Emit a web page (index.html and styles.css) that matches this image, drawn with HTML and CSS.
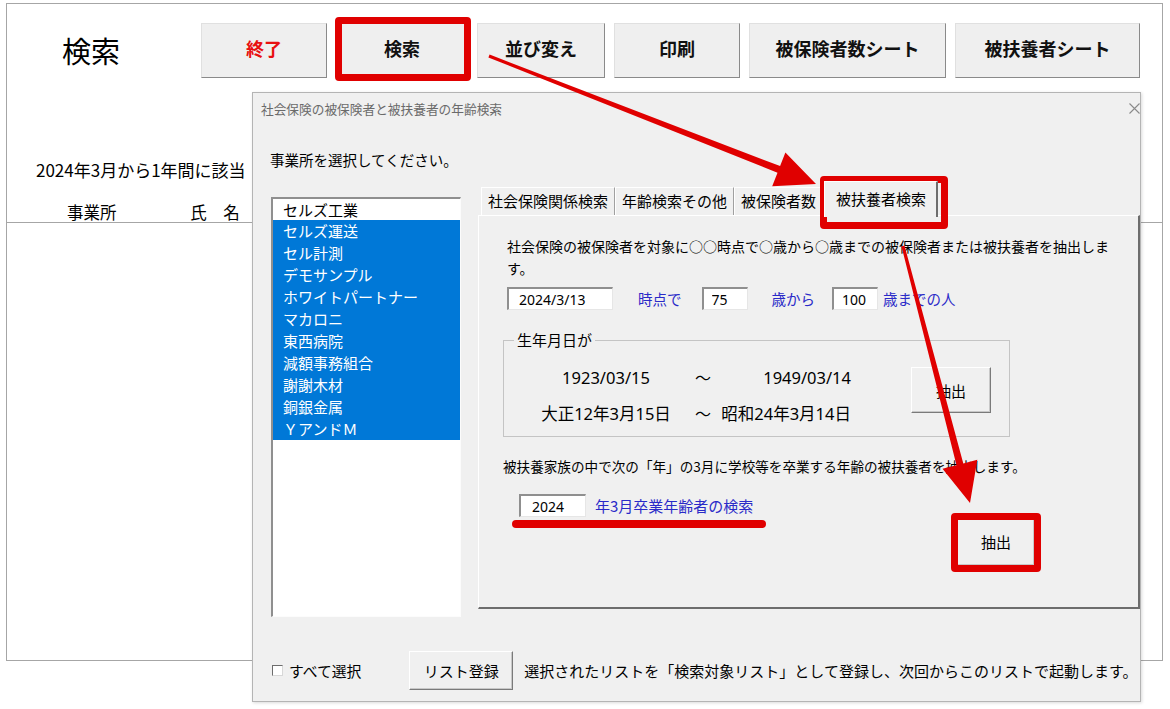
FILE: index.html
```html
<!DOCTYPE html>
<html lang="ja">
<head>
    <meta charset="UTF-8">
    <meta name="viewport" content="width=device-width, initial-scale=1.0">
    <title>検索</title>
    <link rel="stylesheet" href="styles.css">
</head>
<body>
    <!-- シート本体 -->
    <div class="sheet">
        <div class="sheet-head">
            <div class="sheet-title">検索</div>
            <button class="sheet-btn btn-exit">終了</button>
            <button class="sheet-btn">検索</button>
            <button class="sheet-btn">並び変え</button>
            <button class="sheet-btn">印刷</button>
            <button class="sheet-btn">被保険者数シート</button>
            <button class="sheet-btn">被扶養者シート</button>
        </div>
        <div class="sheet-note">2024年3月から1年間に該当</div>
        <div class="sheet-cols">
            <span class="col-office">事業所</span>
            <span class="col-name">氏　名</span>
        </div>
    </div>

    <!-- ダイアログ -->
    <div class="dialog">
        <div class="dlg-title">
            <span>社会保険の被保険者と被扶養者の年齢検索</span>
            <svg class="dlg-close" width="11" height="11" viewBox="0 0 11 11">
                <path d="M0.5 0.5 L10.5 10.5 M10.5 0.5 L0.5 10.5" stroke="#8a8a8a" stroke-width="1.1" fill="none"/>
            </svg>
        </div>
        <div class="dlg-prompt">事業所を選択してください。</div>

        <div class="dlg-main">
            <ul class="office-list">
                <li>セルズ工業</li>
                <li class="selected">セルズ運送</li>
                <li class="selected">セル計測</li>
                <li class="selected">デモサンプル</li>
                <li class="selected">ホワイトパートナー</li>
                <li class="selected">マカロニ</li>
                <li class="selected">東西病院</li>
                <li class="selected">減額事務組合</li>
                <li class="selected">謝謝木材</li>
                <li class="selected">銅銀金属</li>
                <li class="selected">ＹアンドＭ</li>
            </ul>

            <div class="tabs">
                <div class="tab-strip">
                    <div class="tab">社会保険関係検索</div>
                    <div class="tab">年齢検索その他</div>
                    <div class="tab">被保険者数</div>
                    <div class="tab tab-active">被扶養者検索</div>
                </div>
                <div class="tab-panel">
                    <p class="desc">社会保険の被保険者を対象に○○時点で○歳から○歳までの被保険者または被扶養者を抽出しま<br>す。</p>
                    <div class="age-row">
                        <input class="field field-date" type="text" value="2024/3/13">
                        <span class="lbl lbl-at">時点で</span>
                        <input class="field field-num" type="text" value="75">
                        <span class="lbl lbl-from">歳から</span>
                        <input class="field field-num" type="text" value="100">
                        <span class="lbl lbl-to">歳までの人</span>
                    </div>

                    <fieldset class="birth">
                        <legend>生年月日が</legend>
                        <div class="birth-grid">
                            <span class="b-col1">1923/03/15</span>
                            <span class="b-tilde">～</span>
                            <span class="b-col2">1949/03/14</span>
                            <button class="win-btn birth-btn">抽出</button>
                            <span class="b-col1">大正12年3月15日</span>
                            <span class="b-tilde">～</span>
                            <span class="b-col2">昭和24年3月14日</span>
                        </div>
                    </fieldset>

                    <p class="desc2">被扶養家族の中で次の「年」の3月に学校等を卒業する年齢の被扶養者を抽出します。</p>
                    <div class="grad-row">
                        <input class="field field-year" type="text" value="2024">
                        <span class="lbl lbl-grad">年3月卒業年齢者の検索</span>
                    </div>
                    <button class="win-btn grad-btn">抽出</button>
                </div>
            </div>
        </div>

        <div class="dlg-bottom">
            <span class="check"></span>
            <span class="check-label">すべて選択</span>
            <button class="win-btn list-btn">リスト登録</button>
            <span class="bottom-note">選択されたリストを「検索対象リスト」として登録し、次回からこのリストで起動します。</span>
        </div>
    </div>

    <!-- 注釈（赤枠・矢印） -->
    <div class="mark mark-search"></div>
    <div class="mark mark-tab"></div>
    <div class="mark mark-extract"></div>
    <div class="underline"></div>
    <svg class="arrows" width="1170" height="709" viewBox="0 0 1170 709">
        <polygon fill="#e00000" points="489.6,54.6 780.1,166.1 785.4,152.6 816,184 772.2,186.2 777.5,172.7 488.4,57.4"/>
        <polygon fill="#e00000" points="904.5,245.6 963.3,463.4 977.3,459.8 970,503 942.5,468.8 956.5,465.2 901.5,246.4"/>
    </svg>
</body>
</html>
```

FILE: styles.css
```css
body {
    margin: 0;
    background-color: #ffffff;
    font-family: "Noto Sans CJK JP", sans-serif;
    color: #000;
}

/* シート */
.sheet {
    margin: 3px 0 0 6px;
    width: 1157px;
    height: 658px;
    border: 1px solid #a6a6a6;
    box-sizing: border-box;
}
.sheet-head {
    display: flex;
    padding-top: 19px;
    height: 55px;
}
.sheet-title {
    width: 194px;
    padding: 0 0 0 55px;
    box-sizing: border-box;
    font-size: 29px;
    line-height: 55px;
}
.sheet-btn {
    height: 55px;
    margin-left: 9px;
    padding: 0 0 5px 0;
    background: #efefef;
    border: 1px solid;
    border-color: #e0e0e0 #8a8a8a #8a8a8a #e0e0e0;
    font-family: "Noto Sans CJK JP", sans-serif;
    font-size: 18px;
    font-weight: bold;
    color: #111;
}
.sheet-btn:nth-of-type(1) { width: 126px; margin-left: 0; }
.sheet-btn:nth-of-type(2) { width: 132px; }
.sheet-btn:nth-of-type(3) { width: 128px; }
.sheet-btn:nth-of-type(4) { width: 126px; }
.sheet-btn:nth-of-type(5) { width: 197px; }
.sheet-btn:nth-of-type(6) { width: 185px; }
.btn-exit {
    color: #e81010;
}
.sheet-note {
    margin-top: 82px;
    padding-left: 29px;
    font-size: 17px;
    line-height: 20px;
    white-space: nowrap;
}
.sheet-cols {
    margin-top: 22px;
    height: 20px;
    border-bottom: 1px solid #a6a6a6;
    font-size: 16.5px;
    line-height: 20px;
}
.col-office {
    margin-left: 60px;
}
.col-name {
    margin-left: 70px;
}

/* ダイアログ */
.dialog {
    position: absolute;
    left: 252px;
    top: 92px;
    width: 889px;
    height: 610px;
    box-sizing: border-box;
    background: #f0f0f0;
    border: 1px solid #b4b4b4;
    box-shadow: 1px 1px 3px rgba(0, 0, 0, 0.15);
    font-family: "Noto Sans", "Noto Sans CJK JP", sans-serif;
}
.dlg-title {
    display: flex;
    justify-content: space-between;
    align-items: center;
    height: 31px;
    padding: 0 0 0 8px;
    font-family: "Noto Sans CJK JP", sans-serif;
    font-size: 12.7px;
    color: #6a6a6a;
}
.dlg-prompt {
    margin-top: 26px;
    padding-left: 17px;
    font-family: "Noto Sans CJK JP", sans-serif;
    font-size: 14.5px;
    line-height: 20px;
}
.dlg-main {
    display: flex;
    margin-top: 10px;
}
.office-list {
    list-style: none;
    margin: 17px 0 0 18px;
    padding: 0;
    width: 190px;
    height: 420px;
    box-sizing: border-box;
    background: #fff;
    border-top: 2px solid #8f8f8f;
    border-left: 2px solid #8f8f8f;
    border-right: 1px solid #fcfcfc;
    border-bottom: 1px solid #fcfcfc;
}
.office-list li {
    height: 22px;
    padding-left: 10px;
    font-family: "Noto Sans CJK JP", sans-serif;
    font-size: 15px;
    line-height: 21px;
}
.office-list li:first-child {
    height: 21px;
}
.office-list li.selected {
    background: #0078d7;
    color: #fff;
}

.tabs {
    margin-left: 17px;
    width: 662px;
}
.tab-strip {
    display: flex;
    align-items: flex-end;
    height: 35px;
    padding-left: 3px;
}
.tab {
    height: 28px;
    padding: 0 6px;
    box-sizing: border-box;
    border-top: 1px solid #fff;
    border-left: 1px solid #fff;
    border-right: 1px solid #a0a0a0;
    font-family: "Noto Sans CJK JP", sans-serif;
    font-size: 15px;
    line-height: 26px;
    white-space: nowrap;
}
.tab-active {
    position: relative;
    z-index: 1;
    height: 36px;
    margin: 0 0 -2px 1px;
    padding: 0 10px 0 11px;
    background: #f0f0f0;
    border-right: 2px solid #6d6d6d;
    line-height: 33px;
}
.tab-panel {
    height: 394px;
    box-sizing: border-box;
    padding-top: 19px;
    border-top: 1px solid #fff;
    border-left: 1px solid #fff;
    border-right: 2px solid #6d6d6d;
    border-bottom: 2px solid #6d6d6d;
}
.desc {
    margin: 0 0 0 28px;
    font-family: "Noto Sans CJK JP", sans-serif;
    font-size: 14px;
    line-height: 22px;
}
.age-row {
    display: flex;
    align-items: center;
    margin: 8px 0 0 28px;
    height: 23px;
}
.field {
    height: 23px;
    box-sizing: border-box;
    margin: 0;
    background: #fff;
    border-top: 2px solid #8f8f8f;
    border-left: 2px solid #8f8f8f;
    border-right: 1px solid #e6e6e6;
    border-bottom: 1px solid #e6e6e6;
    font-family: "Noto Sans", sans-serif;
    font-size: 14px;
    color: #000;
    outline: none;
}
.field-date {
    width: 106px;
    padding-left: 10px;
}
.field-num {
    width: 46px;
    padding-left: 8px;
}
.field-year {
    width: 67px;
    padding-left: 11px;
}
.lbl {
    color: #2a2ac8;
    font-family: "Noto Sans CJK JP", sans-serif;
    font-size: 14.5px;
    white-space: nowrap;
}
.lbl-at {
    margin: 0 20px 0 25px;
}
.lbl-from {
    margin: 0 17px 0 24px;
}
.lbl-to {
    margin-left: 5px;
}

.birth {
    margin: 20px 0 0 24px;
    width: 507px;
    box-sizing: border-box;
    padding: 9px 0 5px 20px;
    border: 1px solid #c4c4c4;
}
.birth legend {
    margin-left: -10px;
    padding: 0 3px;
    font-family: "Noto Sans CJK JP", sans-serif;
    font-size: 15px;
    line-height: 20px;
}
.birth-grid {
    display: grid;
    grid-template-columns: 164px 30px 133px 140px;
    grid-template-rows: 36px 36px;
    align-items: center;
    font-family: "Noto Sans", "Noto Sans CJK JP", sans-serif;
    font-size: 16.5px;
}
.b-col1 {
    text-align: center;
    white-space: nowrap;
}
.b-tilde {
    text-align: center;
    font-family: "Noto Sans CJK JP", sans-serif;
    font-size: 16px;
}
.b-col2 {
    text-align: right;
    white-space: nowrap;
}
.win-btn {
    margin: 0;
    padding: 0;
    background: #f0f0f0;
    border: 1px solid;
    border-color: #fff #7a7a7a #7a7a7a #fff;
    box-shadow: inset -1px -1px 0 #c8c8c8;
    font-family: "Noto Sans CJK JP", sans-serif;
    font-size: 15px;
    color: #000;
}
.birth-btn {
    grid-column: 4;
    grid-row: 1 / span 2;
    align-self: start;
    justify-self: end;
    margin-top: 8px;
    width: 80px;
    height: 46px;
}
.desc2 {
    margin: 19px 0 0 24px;
    font-family: "Noto Sans CJK JP", sans-serif;
    font-size: 13.6px;
    line-height: 20px;
    white-space: nowrap;
}
.grad-row {
    display: flex;
    align-items: center;
    margin: 18px 0 0 40px;
    height: 23px;
}
.lbl-grad {
    margin-left: 9px;
    font-size: 15px;
}
.grad-btn {
    display: block;
    margin-left: 478px;
    width: 78px;
    height: 49px;
}

.dlg-bottom {
    display: flex;
    align-items: center;
    height: 39px;
    margin-top: 34px;
    padding-left: 19px;
    font-family: "Noto Sans CJK JP", sans-serif;
}
.check {
    width: 11px;
    height: 11px;
    box-sizing: border-box;
    background: #fff;
    border-top: 1px solid #6d6d6d;
    border-left: 1px solid #6d6d6d;
    border-right: 1px solid #d8d8d8;
    border-bottom: 1px solid #d8d8d8;
}
.check-label {
    margin-left: 6px;
    font-size: 14.8px;
}
.list-btn {
    margin-left: 48px;
    width: 104px;
    height: 39px;
}
.bottom-note {
    margin-left: 11px;
    font-size: 15px;
    white-space: nowrap;
}

/* 注釈 */
.mark {
    position: absolute;
    box-sizing: border-box;
    border: 7px solid #e00000;
    border-radius: 4px;
}
.mark-search {
    left: 335px;
    top: 17px;
    width: 136px;
    height: 64px;
}
.mark-tab {
    left: 820px;
    top: 176px;
    width: 128px;
    height: 53px;
}
.mark-extract {
    left: 951px;
    top: 513px;
    width: 90px;
    height: 59px;
}
.underline {
    position: absolute;
    left: 512px;
    top: 520px;
    width: 254px;
    height: 8px;
    border-radius: 4px;
    background: #e00000;
}
.arrows {
    position: absolute;
    left: 0;
    top: 0;
    pointer-events: none;
}
```
